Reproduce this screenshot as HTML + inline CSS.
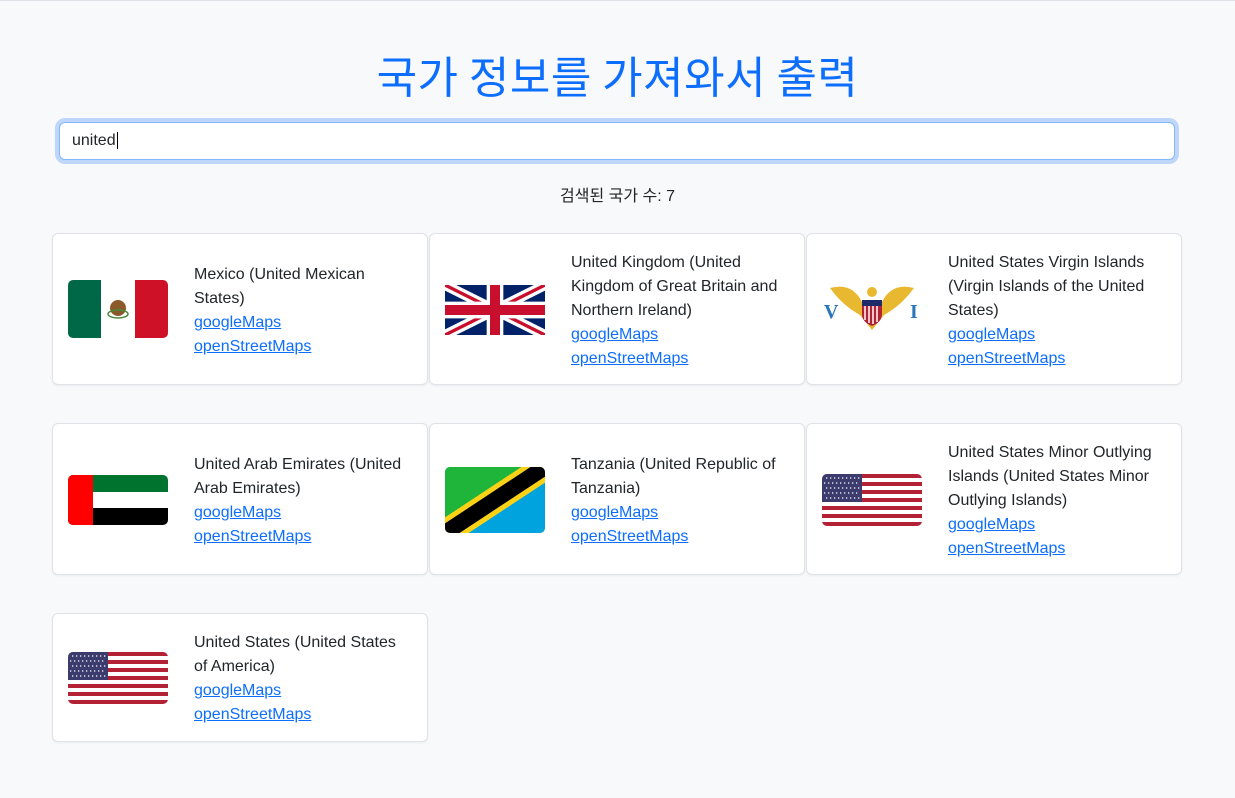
<!DOCTYPE html>
<html><head><meta charset="utf-8">
<style>
*{box-sizing:border-box}
body{margin:0;background:#f8f9fa;font-family:"Liberation Sans","Noto Sans CJK KR",sans-serif;color:#212529;width:1235px;height:798px;overflow:hidden;border-top:1px solid #dee2e6;position:relative}
h1{position:absolute;top:46px;left:0;width:1235px;margin:0;text-align:center;font-weight:400;font-size:44px;letter-spacing:0.5px;color:#0d6efd;line-height:54px;font-family:"Noto Sans CJK KR",sans-serif}
.inp{position:absolute;left:59px;top:121px;width:1116px;height:38px;background:#fff;border:1px solid #86b7fe;border-radius:6px;box-shadow:0 0 0 4px rgba(13,110,253,.25);font-size:16px;padding:8px 12px;line-height:20px}
.cnt{position:absolute;top:185px;left:0;width:1235px;text-align:center;font-size:16px;line-height:22px;font-family:"Liberation Sans","Noto Sans CJK KR",sans-serif}
.card{position:absolute;width:376px;background:#fff;border:1px solid #dfe2e6;border-radius:6px;box-shadow:0 1px 2px rgba(0,0,0,.05)}
.flag{position:absolute;left:15px;width:100px}
.txt{position:absolute;left:141px;width:214px;font-size:16px;line-height:24px}
a{color:#0d6efd;text-decoration:underline;display:block}
svg{display:block}
</style></head><body>
<h1>국가 정보를 가져와서 출력</h1>
<div class="inp">united<span style="border-left:1px solid #000;margin-left:1px"></span></div>
<div class="cnt">검색된 국가 수: 7</div>

<div class="card" style="left:52px;top:232px;height:152px">
<svg class="flag" style="top:46px" width="100" height="58" viewBox="0 0 100 58"><clipPath id="c1"><rect width="100" height="58" rx="5"/></clipPath><g clip-path="url(#c1)"><rect width="34" height="58" fill="#006847"/><rect x="33" width="34" height="58" fill="#fff"/><rect x="67" width="33" height="58" fill="#ce1126"/><circle cx="50" cy="28" r="8" fill="#8b5a2b"/><ellipse cx="50" cy="34" rx="10" ry="4" fill="none" stroke="#4a8a3a" stroke-width="1.5"/></g></svg>
<div class="txt" style="top:29px">Mexico (United Mexican States)<a>googleMaps</a><a>openStreetMaps</a></div></div>

<div class="card" style="left:429px;top:232px;height:152px">
<svg class="flag" style="top:51px" width="100" height="50" viewBox="0 0 60 30"><rect width="60" height="30" fill="#012169"/><path d="M0,0 60,30M60,0 0,30" stroke="#fff" stroke-width="6"/><path d="M0,0 60,30M60,0 0,30" stroke="#C8102E" stroke-width="2"/><path d="M30,0v30M0,15h60" stroke="#fff" stroke-width="10"/><path d="M30,0v30M0,15h60" stroke="#C8102E" stroke-width="6"/></svg>
<div class="txt" style="top:17px">United Kingdom (United Kingdom of Great Britain and Northern Ireland)<a>googleMaps</a><a>openStreetMaps</a></div></div>

<div class="card" style="left:806px;top:232px;height:152px">
<svg class="flag" style="top:46px" width="100" height="58" viewBox="0 0 100 58"><rect width="100" height="58" fill="#fff"/><path d="M8,8 Q30,2 40,22 L60,22 Q70,2 92,8 Q80,25 62,35 L50,50 L38,35 Q20,25 8,8Z" fill="#e8b830"/><circle cx="50" cy="12" r="5" fill="#e8b830"/><rect x="40" y="20" width="20" height="6" fill="#1f2a6b"/><path d="M40,26h20v8q0,8-10,12q-10-4-10-12z" fill="#b22234"/><path d="M43,26v14M47,26v17M51,26v18M55,26v16" stroke="#fff" stroke-width="1.5"/><text x="2" y="38" font-family="Liberation Serif" font-weight="700" font-size="20" fill="#2b76b9">V</text><text x="88" y="38" font-family="Liberation Serif" font-weight="700" font-size="20" fill="#2b76b9">I</text></svg>
<div class="txt" style="top:17px">United States Virgin Islands (Virgin Islands of the United States)<a>googleMaps</a><a>openStreetMaps</a></div></div>

<div class="card" style="left:52px;top:422px;height:152px">
<svg class="flag" style="top:51px" width="100" height="50" viewBox="0 0 100 50"><clipPath id="c2"><rect width="100" height="50" rx="5"/></clipPath><g clip-path="url(#c2)"><rect width="100" height="17" fill="#00732f"/><rect y="17" width="100" height="16" fill="#fff"/><rect y="33" width="100" height="17" fill="#000"/><rect width="25" height="50" fill="#ff0000"/></g></svg>
<div class="txt" style="top:29px">United Arab Emirates (United Arab Emirates)<a>googleMaps</a><a>openStreetMaps</a></div></div>

<div class="card" style="left:429px;top:422px;height:152px">
<svg class="flag" style="top:43px" width="100" height="66" viewBox="0 0 100 66"><clipPath id="c3"><rect width="100" height="66" rx="5"/></clipPath><g clip-path="url(#c3)"><rect width="100" height="66" fill="#00a3dd"/><path d="M0,0H100L0,66Z" fill="#1eb53a"/><path d="M0,66 100,0" stroke="#fcd116" stroke-width="26"/><path d="M0,66 100,0" stroke="#000" stroke-width="16"/></g></svg>
<div class="txt" style="top:29px">Tanzania (United Republic of Tanzania)<a>googleMaps</a><a>openStreetMaps</a></div></div>

<div class="card" style="left:806px;top:422px;height:152px">
<svg class="flag" style="top:50px" width="100" height="52" viewBox="0 0 100 52"><clipPath id="c4"><rect width="100" height="52" rx="5"/></clipPath><g clip-path="url(#c4)"><rect width="100" height="52" fill="#fff"/><path d="M0,2h100M0,10h100M0,18h100M0,26h100M0,34h100M0,42h100M0,50h100" stroke="#b22234" stroke-width="4"/><rect width="40" height="28" fill="#3c3b6e"/><path d="M4,4h34M2,9h34M4,14h34M2,19h34M4,24h34" stroke="#fff" stroke-width="1.3" stroke-dasharray="1.3 2.7"/></g></svg>
<div class="txt" style="top:17px">United States Minor Outlying Islands (United States Minor Outlying Islands)<a>googleMaps</a><a>openStreetMaps</a></div></div>

<div class="card" style="left:52px;top:612px;height:129px">
<svg class="flag" style="top:38px" width="100" height="52" viewBox="0 0 100 52"><clipPath id="c5"><rect width="100" height="52" rx="5"/></clipPath><g clip-path="url(#c5)"><rect width="100" height="52" fill="#fff"/><path d="M0,2h100M0,10h100M0,18h100M0,26h100M0,34h100M0,42h100M0,50h100" stroke="#b22234" stroke-width="4"/><rect width="40" height="28" fill="#3c3b6e"/><path d="M4,4h34M2,9h34M4,14h34M2,19h34M4,24h34" stroke="#fff" stroke-width="1.3" stroke-dasharray="1.3 2.7"/></g></svg>
<div class="txt" style="top:17px">United States (United States of America)<a>googleMaps</a><a>openStreetMaps</a></div></div>
</body></html>
